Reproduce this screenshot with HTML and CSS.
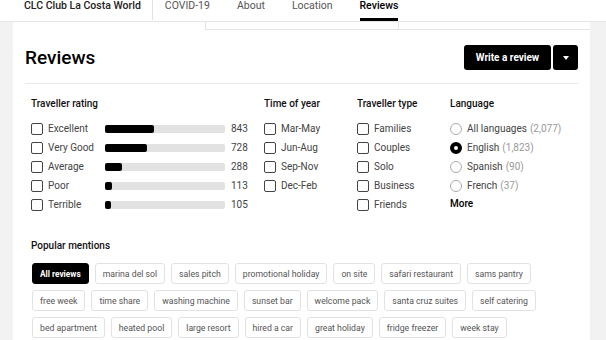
FILE: index.html
```html
<!DOCTYPE html>
<html lang="en">
<head>
    <meta charset="UTF-8">
    <meta name="viewport" content="width=device-width, initial-scale=1.0">
    <title>CLC Club La Costa World - Reviews</title>
    <link rel="stylesheet" href="styles.css">
</head>
<body>

    <nav class="topnav">
        <span class="brand">CLC Club La Costa World</span>
        <span class="sep"></span>
        <div class="tabs">
            <span class="tab">COVID-19</span>
            <span class="tab">About</span>
            <span class="tab">Location</span>
            <span class="tab active">Reviews</span>
        </div>
    </nav>

    <div class="page">
        <div class="card">
            <div class="card-top"><div class="card-top-cell"></div></div>

            <div class="review-head">
                <h1>Reviews</h1>
                <div class="write-btns">
                    <button class="btn write">Write a review</button>
                    <button class="btn caret"><span class="tri"></span></button>
                </div>
            </div>

            <div class="filters">
                <div>
                    <div class="filter-title">Traveller rating</div>
                    <div class="rating"><span class="box"></span><span>Excellent</span><span class="bar"><span style="width:48.7px"></span></span><span class="count">843</span></div>
                    <div class="rating"><span class="box"></span><span>Very Good</span><span class="bar"><span style="width:42px"></span></span><span class="count">728</span></div>
                    <div class="rating"><span class="box"></span><span>Average</span><span class="bar"><span style="width:16.6px"></span></span><span class="count">288</span></div>
                    <div class="rating"><span class="box"></span><span>Poor</span><span class="bar"><span style="width:6.5px"></span></span><span class="count">113</span></div>
                    <div class="rating"><span class="box"></span><span>Terrible</span><span class="bar"><span style="width:6px"></span></span><span class="count">105</span></div>
                </div>
                <div>
                    <div class="filter-title">Time of year</div>
                    <div class="opt"><span class="box"></span>Mar-May</div>
                    <div class="opt"><span class="box"></span>Jun-Aug</div>
                    <div class="opt"><span class="box"></span>Sep-Nov</div>
                    <div class="opt"><span class="box"></span>Dec-Feb</div>
                </div>
                <div>
                    <div class="filter-title">Traveller type</div>
                    <div class="opt"><span class="box"></span>Families</div>
                    <div class="opt"><span class="box"></span>Couples</div>
                    <div class="opt"><span class="box"></span>Solo</div>
                    <div class="opt"><span class="box"></span>Business</div>
                    <div class="opt"><span class="box"></span>Friends</div>
                </div>
                <div>
                    <div class="filter-title">Language</div>
                    <div class="opt"><span class="radio"></span>All languages <span class="muted">(2,077)</span></div>
                    <div class="opt"><span class="radio on"></span>English <span class="muted">(1,823)</span></div>
                    <div class="opt"><span class="radio"></span>Spanish <span class="muted">(90)</span></div>
                    <div class="opt"><span class="radio"></span>French <span class="muted">(37)</span></div>
                    <div class="more">More</div>
                </div>
            </div>

            <div class="mentions">
                <div class="filter-title">Popular mentions</div>
                <div class="chip-row">
                    <span class="chip on">All reviews</span>
                    <span class="chip">marina del sol</span>
                    <span class="chip">sales pitch</span>
                    <span class="chip">promotional holiday</span>
                    <span class="chip">on site</span>
                    <span class="chip">safari restaurant</span>
                    <span class="chip">sams pantry</span>
                </div>
                <div class="chip-row">
                    <span class="chip">free week</span>
                    <span class="chip">time share</span>
                    <span class="chip">washing machine</span>
                    <span class="chip">sunset bar</span>
                    <span class="chip">welcome pack</span>
                    <span class="chip">santa cruz suites</span>
                    <span class="chip">self catering</span>
                </div>
                <div class="chip-row">
                    <span class="chip">bed apartment</span>
                    <span class="chip">heated pool</span>
                    <span class="chip">large resort</span>
                    <span class="chip">hired a car</span>
                    <span class="chip">great holiday</span>
                    <span class="chip">fridge freezer</span>
                    <span class="chip">week stay</span>
                </div>
            </div>
        </div>
    </div>

</body>
</html>
```

FILE: styles.css
```css
* {
    box-sizing: border-box;
}
body {
    margin: 0;
    font-family: Roboto, "Noto Sans", sans-serif;
    background: #f2f2f2;
    color: #333;
    height: 340px;
    overflow: hidden;
}
.topnav {
    display: flex;
    align-items: flex-start;
    height: 22px;
    background: #fff;
    border-bottom: 1px solid #e4e4e4;
    padding-left: 24px;
    font-size: 10.5px;
    line-height: 12px;
}
.brand {
    font-weight: 500;
    color: #222;
}
.sep {
    width: 1px;
    height: 20px;
    background: #e2e2e2;
    margin: 0 12px 0 11px;
}
.tabs {
    display: flex;
    gap: 27px;
}
.tab {
    color: #555;
    height: 21px;
}
.tab.active {
    font-weight: 500;
    color: #000;
    border-bottom: 3px solid #000;
}
.page {
    padding: 0 16px 0 13px;
}
.card {
    background: #fff;
    padding: 0 12px;
    height: 318px;
}
.card-top {
    display: flex;
    height: 8px;
    margin: 0 -12px 0 180px;
    border-left: 1px solid #e4e4e4;
    border-bottom: 1px solid #e4e4e4;
}
.card-top-cell {
    width: 193px;
    border-right: 1px solid #e4e4e4;
}
.review-head {
    display: flex;
    justify-content: space-between;
    align-items: center;
    padding: 15px 0 13px;
    border-bottom: 1px solid #e8e8e8;
}
h1 {
    margin: 0;
    font-size: 19px;
    font-weight: 500;
    color: #000;
}
.write-btns {
    display: flex;
    gap: 2px;
}
.btn {
    height: 25px;
    border: none;
    background: #000;
    color: #fff;
    border-radius: 3px;
    font-family: inherit;
    font-size: 10px;
    font-weight: 700;
    display: flex;
    align-items: center;
    justify-content: center;
}
.write {
    width: 87px;
}
.caret {
    width: 25px;
}
.tri {
    border-left: 3px solid transparent;
    border-right: 3px solid transparent;
    border-top: 4px solid #fff;
}
.filters {
    display: grid;
    grid-template-columns: 233px 93px 93px auto;
    padding: 13px 0 0 6px;
}
.filter-title {
    font-size: 10px;
    font-weight: 500;
    line-height: 14px;
    color: #111;
    margin-bottom: 8px;
}
.rating {
    display: grid;
    grid-template-columns: 12px 52px 120px auto;
    column-gap: 5px;
    align-items: center;
    height: 19px;
    font-size: 10px;
    color: #444;
}
.opt {
    display: flex;
    align-items: center;
    gap: 5px;
    height: 19px;
    font-size: 10px;
    color: #444;
    white-space: nowrap;
}
.box {
    width: 12px;
    height: 12px;
    border: 1px solid #444;
    border-radius: 2px;
}
.bar {
    height: 8px;
    background: #e2e2e2;
    border-radius: 2px;
}
.bar span {
    display: block;
    height: 100%;
    background: #000;
    border-radius: 2px;
}
.count {
    margin-left: 1px;
}
.radio {
    width: 12px;
    height: 12px;
    border-radius: 50%;
    border: 1px solid #aaa;
    flex: none;
}
.radio.on {
    border: 4px solid #000;
}
.muted {
    color: #999;
    margin-left: -2px;
}
.more {
    font-size: 10px;
    font-weight: 500;
    color: #000;
    line-height: 17px;
}
.mentions {
    padding: 25px 0 0 6px;
}
.mentions .filter-title {
    margin-bottom: 10px;
}
.chip-row {
    display: flex;
    gap: 6px;
    margin: 0 0 6px 1px;
}
.chip {
    height: 21px;
    padding: 0 7px;
    border: 1px solid #e2e2e2;
    border-radius: 3px;
    font-size: 8.7px;
    color: #555;
    display: flex;
    align-items: center;
    white-space: nowrap;
}
.chip.on {
    background: #000;
    border-color: #000;
    color: #fff;
    font-weight: 700;
    font-size: 8.3px;
}
```
